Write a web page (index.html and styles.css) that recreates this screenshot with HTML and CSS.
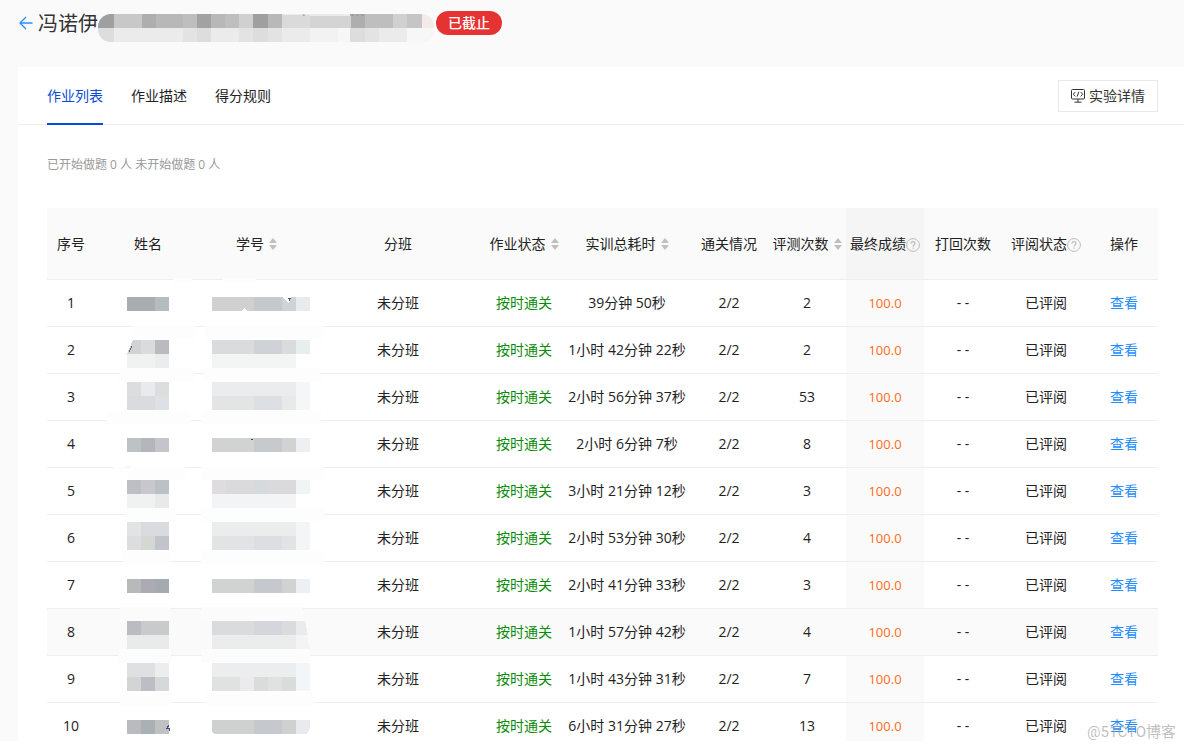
FILE: index.html
```html
<!DOCTYPE html>
<html lang="zh-CN">
<head>
<meta charset="utf-8">
<title>作业列表</title>
<link rel="stylesheet" href="styles.css">
</head>
<body>
<div class="app">
  <header class="topbar">
    <a class="back" href="#" aria-label="返回"><svg width="14" height="14" viewBox="0 0 14 14" fill="none" stroke="currentColor" stroke-width="1.3"><path d="M13.5 7H1M7 1L1 7l6 6"/></svg></a>
    <h1 class="title">冯诺伊</h1>
    <svg class="title-mask" width="336" height="28" viewBox="0 0 338 28" preserveAspectRatio="none" shape-rendering="crispEdges" aria-hidden="true">
      <defs><clipPath id="pill"><rect width="338" height="28" rx="13"/></clipPath></defs>
      <g clip-path="url(#pill)">
        <path fill="#ebebeb" d="M0 0h338v28H0z"/>
        <path fill="#9f9f9f" d="M0 0h16v14H0zM156 0h15v14h-15z"/>
        <path fill="#c8c8c8" d="M16 0h28v14H16z"/>
        <path fill="#aeaeae" d="M44 0h14v14H44zM254 0h15v14h-15z"/>
        <path fill="#b8b8b8" d="M58 0h28v14H58zM114 0h14v14h-14zM171 0h14v14h-14z"/>
        <path fill="#bebebe" d="M86 0h14v14H86zM128 0h14v14h-14zM269 0h28v14h-28z"/>
        <path fill="#a2a2a2" d="M100 0h14v14h-14z"/>
        <path fill="#d0d0d0" d="M142 0h14v14h-14zM297 0h14v14h-14z"/>
        <path fill="#dadada" d="M185 1h28v13h-28z"/>
        <path fill="#d4d4d4" d="M213 2h42v12h-42z"/>
        <path fill="#c5c5c5" d="M311 0h15v14h-15z"/>
        <path fill="#f5eaea" d="M326 0h12v14h-12z"/>
        <path fill="#dddddd" d="M0 14h16v14H0zM100 14h14v14h-14zM156 14h15v14h-15zM254 14h15v14h-15z"/>
        <path fill="#e3e3e3" d="M86 14h14v14H86zM142 14h14v14h-14zM171 14h14v14h-14zM269 14h14v14h-14z"/>
        <path fill="#f2f2f2" d="M213 14h28v14h-28z"/>
        <path fill="#f7f7f7" d="M241 14h13v14h-13zM311 14h27v14h-27z"/>
      </g>
      <path stroke="#888" stroke-dasharray="2 3" d="M206 1h3M255 1h14"/>
    </svg>
    <span class="badge">已截止</span>
  </header>

  <main class="card">
    <div class="tabbar">
      <nav class="tabs">
        <a class="tab tab-active" href="#" aria-current="page">作业列表</a>
        <a class="tab" href="#">作业描述</a>
        <a class="tab" href="#">得分规则</a>
      </nav>
      <button class="detail" type="button"><svg width="14" height="14" viewBox="0 0 14 14" fill="none" stroke="currentColor"><rect x=".5" y=".5" width="13" height="9.5" rx="1"/><path d="M4.3 3L2.3 5.2l2 2.2M9.7 3l2 2.2-2 2.2M7.9 2.8L6.1 7.6M7 10v3M3.5 13.2h7"/></svg>实验详情</button>
    </div>

    <p class="summary">已开始做题 0 人 未开始做题 0 人</p>

    <table class="grid">
      <colgroup>
        <col class="w48"><col class="w106"><col class="w111"><col class="w172"><col class="w80"><col class="w126">
        <col class="w78"><col class="w78"><col class="w78"><col class="w78"><col class="w88"><col class="w68">
      </colgroup>
      <thead>
        <tr>
          <th scope="col">序号</th>
          <th scope="col">姓名</th>
          <th scope="col"><span class="head">学号<svg class="sort" width="8" height="12" viewBox="0 0 8 12"><path d="M4 0l4 5H0zM4 12l4-5H0z"/></svg></span></th>
          <th scope="col">分班</th>
          <th scope="col"><span class="head">作业状态<svg class="sort" width="8" height="12" viewBox="0 0 8 12"><path d="M4 0l4 5H0zM4 12l4-5H0z"/></svg></span></th>
          <th scope="col"><span class="head">实训总耗时<svg class="sort" width="8" height="12" viewBox="0 0 8 12"><path d="M4 0l4 5H0zM4 12l4-5H0z"/></svg></span></th>
          <th scope="col">通关情况</th>
          <th scope="col"><span class="head">评测次数<svg class="sort" width="8" height="12" viewBox="0 0 8 12"><path d="M4 0l4 5H0zM4 12l4-5H0z"/></svg></span></th>
          <th scope="col" class="sorted"><span class="head help">最终成绩<svg width="14" height="14" viewBox="0 0 14 14" fill="none" stroke="#bbb"><circle cx="7" cy="7" r="6.4"/><path d="M5 5.6c0-2.6 4-2.6 4 0 0 1.4-2 1.5-2 3M7 9.6v1.2" stroke-width="1.2"/></svg></span></th>
          <th scope="col">打回次数</th>
          <th scope="col"><span class="head help">评阅状态<svg width="14" height="14" viewBox="0 0 14 14" fill="none" stroke="#bbb"><circle cx="7" cy="7" r="6.4"/><path d="M5 5.6c0-2.6 4-2.6 4 0 0 1.4-2 1.5-2 3M7 9.6v1.2" stroke-width="1.2"/></svg></span></th>
          <th scope="col">操作</th>
        </tr>
      </thead>
      <tbody>
        <tr>
          <td>1</td>
          <td><svg class="mask" width="106" height="46" viewBox="0 0 106 46"><path fill="#fdfdfd" d="M38 46h63v13H36zM78-2h19v5H78z"/><path fill="#a9acb0" d="M32 17h28v14H32z"/><path fill="#b5bcc0" d="M60 17h14v14H60z"/></svg></td>
          <td><svg class="mask" width="111" height="46" viewBox="0 0 111 46"><path fill="#fdfdfd" d="M4 46h119v13H4zM22-2h33v5H22z"/><path fill="#d0d0d0" d="M11 17h42v14H11z"/><path fill="#c6c9cc" d="M53 17h28v14H53z"/><path fill="#d0d3d5" d="M81 17h14v14H81z"/><path fill="#e7ebee" d="M95 17h14v14H95z"/><path fill="#fff" d="M82 17h8l-2 7zM41 31l2-3 3 3z"/><path stroke="#555" fill="none" d="M87 18h2v1l-1 2"/></svg></td>
          <td>未分班</td><td class="pass">按时通关</td><td>39分钟 50秒</td><td>2/2</td><td>2</td><td class="score">100.0</td><td>- -</td><td>已评阅</td><td><a class="view" href="#">查看</a></td>
        </tr>
        <tr>
          <td>2</td>
          <td><svg class="mask" width="106" height="46" viewBox="0 0 106 46"><path fill="#fdfdfd" d="M26 41h73v14H23z"/><path fill="#cfd3d5" d="M38 13h8v14H32z"/><path fill="#d9dbdd" d="M46 13h14v14H46z"/><path fill="#b9bbbf" d="M60 13h14v14H60z"/><path fill="#f0f2f2" d="M32 27h28v14H32z"/><path fill="#eaeced" d="M60 27h14v14H60z"/><path stroke="#666" d="M34 25l3-6"/></svg></td>
          <td><svg class="mask" width="111" height="46" viewBox="0 0 111 46"><path fill="#fdfdfd" d="M3 41h117v14H3z"/><path fill="#dadbdc" d="M11 13h42v14H11zM81 13h14v14H81z"/><path fill="#cfd3d7" d="M53 13h28v14H53z"/><path fill="#e7eeee" d="M95 13h14v14H95z"/><path fill="#f3f5f5" d="M11 27h84v14H11z"/></svg></td>
          <td>未分班</td><td class="pass">按时通关</td><td>1小时 42分钟 22秒</td><td>2/2</td><td>2</td><td class="score">100.0</td><td>- -</td><td>已评阅</td><td><a class="view" href="#">查看</a></td>
        </tr>
        <tr>
          <td>3</td>
          <td><svg class="mask" width="106" height="46" viewBox="0 0 106 46"><path fill="#fdfdfd" d="M12 37h83v13H10z"/><path fill="#dcdddd" d="M32 8h14v14H32zM60 8h14v14H60z"/><path fill="#e7ebed" d="M46 8h14v14H46z"/><path fill="#dadbde" d="M32 22h28v14H32z"/><path fill="#dde1e5" d="M60 22h14v14H60z"/></svg></td>
          <td><svg class="mask" width="111" height="46" viewBox="0 0 111 46"><path fill="#fdfdfd" d="M1 37h119v13H1z"/><path fill="#ebeced" d="M11 8h84v14H11z"/><path fill="#e3e4e4" d="M11 22h42v14H11z"/><path fill="#dcdfe3" d="M53 22h28v14H53z"/><path fill="#e8eaea" d="M81 22h14v14H81z"/><path fill="#f4f6f8" d="M95 8h14v28H95z"/></svg></td>
          <td>未分班</td><td class="pass">按时通关</td><td>2小时 56分钟 37秒</td><td>2/2</td><td>53</td><td class="score">100.0</td><td>- -</td><td>已评阅</td><td><a class="view" href="#">查看</a></td>
        </tr>
        <tr>
          <td>4</td>
          <td><svg class="mask" width="106" height="46" viewBox="0 0 106 46"><path fill="#fdfdfd" d="M35 46h55v13H33zM18 46h12v2H18z"/><path fill="#bcc3c4" d="M32 17h14v14H32z"/><path fill="#b3b6ba" d="M46 17h14v14H46z"/><path fill="#c4c5ca" d="M60 17h14v14H60z"/></svg></td>
          <td><svg class="mask" width="111" height="46" viewBox="0 0 111 46"><path fill="#fdfdfd" d="M0 46h123v13H0z"/><path fill="#d1d2d2" d="M11 17h42v14H11zM81 17h14v14H81z"/><path fill="#c7cacd" d="M53 17h28v14H53z"/><path fill="#edeff2" d="M95 17h14v14H95z"/><path stroke="#444" d="M50 19l2-1"/></svg></td>
          <td>未分班</td><td class="pass">按时通关</td><td>2小时 6分钟 7秒</td><td>2/2</td><td>8</td><td class="score">100.0</td><td>- -</td><td>已评阅</td><td><a class="view" href="#">查看</a></td>
        </tr>
        <tr>
          <td>5</td>
          <td><svg class="mask" width="106" height="46" viewBox="0 0 106 46"><path fill="#fdfdfd" d="M30 40h51v13H30z"/><path fill="#bdbfc4" d="M32 12h14v14H32z"/><path fill="#c8c6ce" d="M46 12h14v14H46z"/><path fill="#bbc1c4" d="M60 12h14v14H60z"/><path fill="#f0f1f1" d="M32 26h28v14H32z"/><path fill="#e7e9ea" d="M60 26h14v14H60z"/></svg></td>
          <td><svg class="mask" width="111" height="46" viewBox="0 0 111 46"><path fill="#fdfdfd" d="M0 40h123v13H0z"/><path fill="#dfdcdf" d="M11 12h14v14H11z"/><path fill="#dadadd" d="M25 12h28v14H25zM67 12h28v14H67z"/><path fill="#d6dadc" d="M53 12h14v14H53z"/><path fill="#f0f4f5" d="M95 12h14v14H95z"/><path fill="#f3f4f5" d="M11 26h84v14H11z"/></svg></td>
          <td>未分班</td><td class="pass">按时通关</td><td>3小时 21分钟 12秒</td><td>2/2</td><td>3</td><td class="score">100.0</td><td>- -</td><td>已评阅</td><td><a class="view" href="#">查看</a></td>
        </tr>
        <tr>
          <td>6</td>
          <td><svg class="mask" width="106" height="46" viewBox="0 0 106 46"><path fill="#fdfdfd" d="M28 36h47v13H28z"/><path fill="#e2e4e4" d="M32 7h14v14H32z"/><path fill="#d9dbde" d="M46 7h28v14H46z"/><path fill="#dddddf" d="M32 21h14v14H32z"/><path fill="#d5d7d3" d="M46 21h14v14H46z"/><path fill="#c1c4ca" d="M60 21h14v14H60z"/></svg></td>
          <td><svg class="mask" width="111" height="46" viewBox="0 0 111 46"><path fill="#fdfdfd" d="M0 36h123v13H0z"/><path fill="#ebecec" d="M11 7h84v14H11z"/><path fill="#e1e3e4" d="M11 21h42v14H11zM81 21h14v14H81z"/><path fill="#dcdee2" d="M53 21h28v14H53z"/><path fill="#f4f5f6" d="M95 7h14v28H95z"/></svg></td>
          <td>未分班</td><td class="pass">按时通关</td><td>2小时 53分钟 30秒</td><td>2/2</td><td>4</td><td class="score">100.0</td><td>- -</td><td>已评阅</td><td><a class="view" href="#">查看</a></td>
        </tr>
        <tr>
          <td>7</td>
          <td><svg class="mask" width="106" height="46" viewBox="0 0 106 46"><path fill="#fbfbfb" d="M25 45h51v14H25z"/><path fill="#b8b9b9" d="M32 17h14v14H32z"/><path fill="#acabb1" d="M46 17h14v14H46z"/><path fill="#a3abb0" d="M60 17h14v14H60z"/></svg></td>
          <td><svg class="mask" width="111" height="46" viewBox="0 0 111 46"><path fill="#fbfbfb" d="M0 45h102v14H0z"/><path fill="#d1d2d2" d="M11 17h42v14H11zM81 17h14v14H81z"/><path fill="#c5c9cd" d="M53 17h28v14H53z"/><path fill="#edf0f3" d="M95 17h14v14H95z"/></svg></td>
          <td>未分班</td><td class="pass">按时通关</td><td>2小时 41分钟 33秒</td><td>2/2</td><td>3</td><td class="score">100.0</td><td>- -</td><td>已评阅</td><td><a class="view" href="#">查看</a></td>
        </tr>
        <tr class="hovered">
          <td>8</td>
          <td><svg class="mask" width="106" height="46" viewBox="0 0 106 46"><path fill="#fcfcfc" d="M23 40h53v14H23z"/><path fill="#bbbcc1" d="M32 12h14v14H32z"/><path fill="#c8cacc" d="M46 12h28v14H46z"/><path fill="#e9ebeb" d="M32 26h42v14H32z"/></svg></td>
          <td><svg class="mask" width="111" height="46" viewBox="0 0 111 46"><path fill="#fcfcfc" d="M0 40h109v14H0z"/><path fill="#dadbdc" d="M11 12h42v14H11zM81 12h14v14H81z"/><path fill="#d4d6dc" d="M53 12h28v14H53z"/><path fill="#eaebed" d="M95 12h9l3 14H95z"/><path fill="#ebecec" d="M11 26h84v14H11z"/><path fill="#f4f4f4" d="M95 26h11l3 14H95z"/></svg></td>
          <td>未分班</td><td class="pass">按时通关</td><td>1小时 57分钟 42秒</td><td>2/2</td><td>4</td><td class="score">100.0</td><td>- -</td><td>已评阅</td><td><a class="view" href="#">查看</a></td>
        </tr>
        <tr>
          <td>9</td>
          <td><svg class="mask" width="106" height="46" viewBox="0 0 106 46"><path fill="#fdfdfd" d="M25 36h51v14H25z"/><path fill="#dfe0e1" d="M32 7h28v14H32z"/><path fill="#ebedef" d="M60 7h14v14H60z"/><path fill="#d2d4d6" d="M32 21h14v14H32z"/><path fill="#bdbdc5" d="M46 21h14v14H46z"/><path fill="#d5d9da" d="M60 21h14v14H60z"/></svg></td>
          <td><svg class="mask" width="111" height="46" viewBox="0 0 111 46"><path fill="#fdfdfd" d="M4 36h107l3 14H6z"/><path fill="#ecedee" d="M11 7h84v14H11z"/><path fill="#e0e2e2" d="M11 21h28v14H11zM67 21h14v14H67z"/><path fill="#ebebed" d="M39 21h14v14H39z"/><path fill="#dadbdb" d="M53 21h14v14H53zM81 21h14v14H81z"/><path fill="#f3f6f8" d="M95 7h14v28H95z"/></svg></td>
          <td>未分班</td><td class="pass">按时通关</td><td>1小时 43分钟 31秒</td><td>2/2</td><td>7</td><td class="score">100.0</td><td>- -</td><td>已评阅</td><td><a class="view" href="#">查看</a></td>
        </tr>
        <tr>
          <td>10</td>
          <td><svg class="mask" width="106" height="46" viewBox="0 0 106 46"><path fill="#babbbf" d="M32 17h14v14H32z"/><path fill="#a9b1b5" d="M46 17h14v14H46z"/><path fill="#c0c1c3" d="M60 17h14v14H60z"/><path stroke="#44479c" fill="none" d="M74 22l-2 3h2v3"/></svg></td>
          <td><svg class="mask" width="111" height="46" viewBox="0 0 111 46"><path fill="#cfd1d1" d="M11 17h42v14H13l-2-2zM81 17h14v14H81z"/><path fill="#c5c9cd" d="M53 17h28v14H53z"/><path fill="#e7ebee" d="M95 17h14v8l-3 6H95z"/></svg></td>
          <td>未分班</td><td class="pass">按时通关</td><td>6小时 31分钟 27秒</td><td>2/2</td><td>13</td><td class="score">100.0</td><td>- -</td><td>已评阅</td><td><a class="view" href="#">查看</a></td>
        </tr>
      </tbody>
    </table>
  </main>
</div>
<div class="watermark">@51CTO博客</div>
</body>
</html>
```
FILE: styles.css
```css
* { box-sizing: border-box; }

body {
  margin: 0;
  overflow: hidden;
  background: #fff;
  color: #222;
  font: 14px/20px "Open Sans", "Noto Sans CJK SC", sans-serif;
}

a { color: inherit; text-decoration: none; }

.app {
  display: flex;
  flex-direction: column;
  height: calc(100vh - 9px);
  overflow: hidden;
  background: #fafafa;
}

.topbar {
  display: flex;
  flex: none;
  align-items: center;
  height: 67px;
  padding: 0 19px 21px;
}
.back { display: flex; color: #2a8cff; }
.title {
  margin: 0 0 0 5px;
  padding-top: 2px;
  color: #333;
  font-size: 20px;
  font-weight: 400;
  line-height: 28px;
}
.title-mask { margin: 10px 0 0; }
.badge {
  margin-left: 2px;
  padding: 0 12px;
  border-radius: 12px;
  background: #e53333;
  color: #fff;
  font-weight: 500;
  line-height: 24px;
}

.card {
  flex: 1;
  margin-left: 18px;
  background: #fff;
}

.tabbar {
  display: flex;
  align-items: center;
  justify-content: space-between;
  height: 58px;
  padding: 0 26px 0 29px;
  border-bottom: 1px solid #eee;
}
.tabs { display: flex; gap: 28px; }
.tab { padding-top: 2px; border-bottom: 2px solid transparent; line-height: 54px; }
.tab-active { border-color: #0a4bd6; color: #0a4bd6; }
.detail {
  display: flex;
  align-items: center;
  gap: 4px;
  height: 32px;
  padding: 0 12px;
  border: 1px solid #e8e8e8;
  background: #fff;
  color: #333;
  font: inherit;
}

.summary {
  margin: 30px 29px 33px;
  color: #999;
  font-size: 12px;
  line-height: 20px;
}

.grid {
  width: calc(100% - 55px);
  margin: 0 26px 0 29px;
  border-spacing: 0;
  table-layout: fixed;
  text-align: center;
  white-space: nowrap;
}
.w48 { width: 48px; }
.w68 { width: 68px; }
.w78 { width: 78px; }
.w80 { width: 80px; }
.w88 { width: 88px; }
.w106 { width: 106px; }
.w111 { width: 111px; }
.w126 { width: 126px; }
.w172 { width: 172px; }

th {
  height: 72px;
  padding: 0;
  border-bottom: 1px solid #eee;
  background: #fafafa;
  font-weight: 400;
}
th.sorted { background: #f5f5f5; }
td {
  height: 47px;
  padding: 0;
  border-bottom: 1px solid #eee;
}
.head { display: inline-flex; align-items: center; gap: 5px; }
.help { gap: 0; }
.help svg { margin-top: 2px; }
.sort { fill: #bfbfbf; }
.pass { color: #0a8c0a; }
.score { background: #fafafa; color: #ff6a1a; font-size: 13px; }
.view { color: #1e8cff; }
.hovered td { background: #fafafa; }
.mask { display: block; margin: 0 auto; overflow: visible; shape-rendering: crispEdges; }

.watermark {
  position: absolute;
  right: 8px;
  bottom: 8px;
  color: rgba(150, 150, 150, .6);
  font: 15px/20px Roboto, "Noto Sans CJK SC", sans-serif;
}
```
